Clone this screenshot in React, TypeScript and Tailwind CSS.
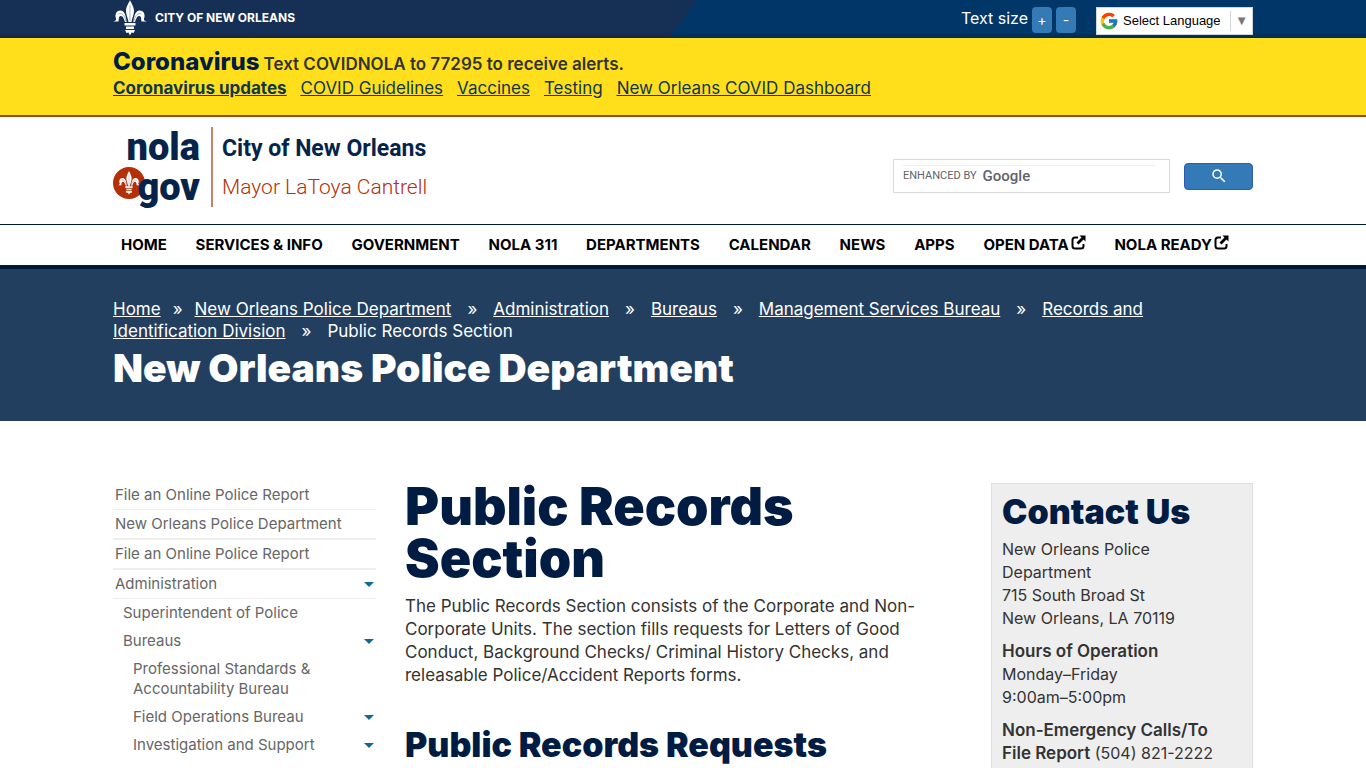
import React from "react";
import { FcGoogle } from "react-icons/fc";
import { MdSearch } from "react-icons/md";

function Fleur({ className }: { className: string }) {
  return (
    <svg viewBox="0 0 34 36" className={className} aria-hidden="true">
      <g fill="currentColor">
        <path d="M17 0c1 3 4 6.500 4 11c0 4-2 7-2.500 11h-3C15 18 13 15 13 11C13 6.500 16 3 17 0z" />
        <path d="M11.500 23h11v2.500h-11zM13 26.500h8v2.500h-8zM12 30h10l-1.500 3-2-.500L17 35.500l-1.500-3-2 .500z" />
        <path d="M13.700 22C13 16 11.500 10.500 7.500 10.500C3 10.500 1.500 15 3 18.500C3.300 20 2.500 21 0 21.500h5.500C6 19 5.500 16.500 7.500 16C10 15.500 11 19 12 22z" />
        <path d="M20.300 22C21 16 22.500 10.500 26.500 10.500C31 10.500 32.500 15 31 18.500C30.700 20 31.500 21 34 21.500h-5.500C28 19 28.500 16.500 26.500 16C24 15.500 23 19 22 22z" />
      </g>
      <g fill="none" stroke="#162f54" strokeWidth="0.6" opacity="0.6">
        <path d="M13 21C11.500 15 9 12.500 5.500 14M21 21C22.500 15 25 12.500 28.500 14M17 5V21" />
      </g>
    </svg>
  );
}

function ExternalIcon() {
  return (
    <svg viewBox="0 0 15 15" className="mb-1.5 h-[15px] w-[15px]" aria-hidden="true">
      <path d="M7 2.500H4Q1.500 2.500 1.500 5v6Q1.500 13.500 4 13.500h6Q12.500 13.500 12.500 11V9" fill="none" stroke="currentColor" strokeWidth="2" />
      <path d="M8.500 0.500H14.500V6.500L12.500 4.500L7.500 9.500L5.500 7.500L10.500 2.500Z" fill="currentColor" />
    </svg>
  );
}

const container = "mx-auto w-full max-w-[1170px] px-[15px]";

const alerts = ["COVID Guidelines", "Vaccines", "Testing", "New Orleans COVID Dashboard"];

const navItems = [
  { label: "Home" },
  { label: "Services & Info" },
  { label: "Government" },
  { label: "NOLA 311" },
  { label: "Departments" },
  { label: "Calendar" },
  { label: "News" },
  { label: "Apps" },
  { label: "Open Data", external: true },
  { label: "NOLA Ready", external: true },
];

const crumbs = [
  ["Home"],
  ["New Orleans Police Department"],
  ["Administration"],
  ["Bureaus"],
  ["Management Services Bureau"],
  ["Records and", "Identification Division"],
];

const sideItems = [
  { label: "File an Online Police Report", style: "h-[26px] border-b pl-0.5", caret: false },
  { label: "New Orleans Police Department", style: "h-[30px] border-b-2 pl-0.5", caret: false },
  { label: "File an Online Police Report", style: "h-[30px] border-b-2 pl-0.5", caret: false },
  { label: "Administration", style: "h-[29px] border-b pl-0.5", caret: true },
  { label: "Superintendent of Police", style: "h-7 pl-2.5", caret: false },
  { label: "Bureaus", style: "h-7 pl-2.5", caret: true },
  { label: "Professional Standards & Accountability Bureau", style: "h-12 pl-5 pr-12", caret: false },
  { label: "Field Operations Bureau", style: "h-7 pl-5", caret: true },
  { label: "Investigation and Support", style: "h-7 pl-5", caret: true },
];

function TopBar() {
  return (
    <div className="h-[38px] bg-[linear-gradient(to_bottom,transparent_32px,#0003),linear-gradient(125deg,#162f54_0_50%,#003768_50%)]">
      <div className={`${container} flex justify-between`}>
        <a href="#city" className="flex items-center gap-2 text-xs font-bold text-white">
          <Fleur className="h-9 w-[34px]" />
          CITY OF NEW ORLEANS
        </a>
        <div className="flex items-center gap-1 text-white">
          <span className="text-base">Text size</span>
          <button className="mt-1 h-[26px] w-5 rounded bg-[#337ab7] text-sm" aria-label="Increase text size">+</button>
          <button className="mt-1 h-[26px] w-5 rounded bg-[#337ab7] text-sm" aria-label="Decrease text size">-</button>
          <button className="mt-1.5 ml-4 flex h-7 w-[157px] items-center border border-gray-300 bg-white pr-0 pl-0.5 font-['Liberation_Sans',sans-serif] text-[13px] text-black">
            <FcGoogle className="mr-1 h-5 w-5" />
            <span className="flex-1 text-left">Select Language</span>
            <span className="border-l border-gray-300 px-1 text-[#777]">▼</span>
          </button>
        </div>
      </div>
    </div>
  );
}

function AlertBanner() {
  return (
    <section className="h-[79px] border-b-2 border-[#964b0b] bg-[#ffdf1b]">
      <div className={`${container} pt-3`}>
        <p className="flex items-baseline gap-1 leading-6">
          <strong className="text-2xl leading-6 font-extrabold text-[#001c43]">Coronavirus</strong>
          <strong className="text-[17px] font-semibold">Text COVIDNOLA to 77295 to receive alerts.</strong>
        </p>
        <p className="flex gap-3.5 text-[17px] leading-6 text-[#12364a] underline">
          <a href="#updates" className="font-bold">Coronavirus updates</a>
          {alerts.map((a) => (
            <a href="#alert" key={a}>{a}</a>
          ))}
        </p>
      </div>
    </section>
  );
}

function Brand() {
  return (
    <a href="#home" className="flex h-20 items-stretch font-[Roboto,sans-serif]">
      <span className="relative flex w-[87px] flex-col items-end text-[38px] leading-10 font-black text-[#06244a]">
        <span className="absolute top-10 left-0 flex h-8 w-8 items-center justify-center rounded-full bg-[#b33009] text-white">
          <Fleur className="h-6 w-7" />
        </span>
        <span>nola</span>
        <span className="relative">gov</span>
      </span>
      <span className="ml-[11px] border-l-2 border-[#c98270] pt-[3px] pl-[9px] whitespace-nowrap">
        <span className="block text-[23px] leading-[38px] font-bold text-[#06244a]">City of New Orleans</span>
        <span className="block text-[21px] leading-[38px] font-light text-[#b33009]">Mayor LaToya Cantrell</span>
      </span>
    </a>
  );
}

function Header() {
  return (
    <header className="h-[107px]">
      <div className={`${container} flex items-start justify-between pt-2.5`}>
        <Brand />
        <form className="mt-8 flex items-center gap-3.5">
          <label className="block h-[34px] w-[277px] border border-[#d9d9d9] px-[9px] pt-[5px] text-[#5f6368]">
            <span className="flex h-[22px] w-[252px] items-center gap-1.5 border-t border-[#eee] font-[Roboto,sans-serif]">
              <span className="text-[11px] whitespace-nowrap">ENHANCED BY</span>
              <span className="text-[15px] font-medium">Google</span>
              <input aria-label="Search" className="h-5 w-0 min-w-0 flex-1 outline-none" />
            </span>
          </label>
          <button type="button" aria-label="Search" className="flex h-[27px] w-[69px] items-center justify-center rounded-sm border border-[#2f5bb7] bg-[#337ab7] text-white">
            <MdSearch className="h-[18px] w-[18px]" />
          </button>
        </form>
      </div>
    </header>
  );
}

function Nav() {
  return (
    <nav className="h-[45px] border-t border-b-4 border-[#001a3a]">
      <div className={`${container} h-10`}>
        <ul className="flex h-full items-center justify-between pr-6 pl-2 text-[15px] font-bold text-black uppercase">
          {navItems.map((n) => (
            <li key={n.label}>
              <a href="#nav" className="flex items-center gap-0.5 whitespace-nowrap">
                {n.label}
                {n.external && <ExternalIcon />}
              </a>
            </li>
          ))}
        </ul>
      </div>
    </nav>
  );
}

function PageBanner() {
  return (
    <section className="h-[152px] bg-[#233f60] text-white">
      <div className={`${container} pt-[29px]`}>
        <ol className="text-[17px] leading-[22px]">
          {crumbs.map((parts, n) => (
            <li key={parts[0]} className="inline">
              <a href="#crumb" className="underline">
                {parts.map((part, i) => (
                  <React.Fragment key={part}>
                    {i > 0 && " "}
                    <span className="inline-block underline">{part}</span>
                  </React.Fragment>
                ))}
              </a>
              <span className={n === 0 ? "mx-3" : "mx-4"}>»</span>
            </li>
          ))}
          <li className="inline-block">Public Records Section</li>
        </ol>
        <p className="mt-2 text-[39px] leading-9 font-black">New Orleans Police Department</p>
      </div>
    </section>
  );
}

function SideMenu() {
  return (
    <ul className="w-[263px] shrink-0 pt-px text-[15px] leading-5 text-[#666]">
      {sideItems.map((s, i) => (
        <li key={i} className={`flex items-start justify-between border-[#eee] ${s.style}`}>
          <a href="#side" className={i === 0 ? "pt-px" : "pt-1"}>{s.label}</a>
          {s.caret && (
            <svg viewBox="0 0 10 5" className="mt-3 mr-0.5 h-[5px] w-2.5 shrink-0" aria-hidden="true">
              <path d="M0 0H10L5 5Z" fill="#126a8f" />
            </svg>
          )}
        </li>
      ))}
    </ul>
  );
}

export default function App() {
  return (
    <div className="h-screen overflow-hidden bg-white font-[Inter,sans-serif] text-[#333]">
      <TopBar />
      <AlertBanner />
      <Header />
      <Nav />
      <PageBanner />
      <div className={`${container} flex items-start pt-[62px]`}>
        <SideMenu />
        <main className="ml-[29px] w-[528px]">
          <h1 className="-mt-0.5 w-[460px] text-[52px] leading-[52px] font-black text-[#001c43]">Public Records Section</h1>
          <p className="mt-2.5 text-[17px] leading-[23px]">
            The Public Records Section consists of the Corporate and Non-Corporate Units. The section fills requests for Letters of Good Conduct, Background Checks/ Criminal History Checks, and releasable Police/Accident Reports forms.
          </p>
          <h2 className="mt-[38px] text-[34px] leading-10 font-black text-[#001c43]">Public Records Requests</h2>
        </main>
        <aside className="ml-auto w-[262px] border border-[#ddd] bg-[#eee] p-2.5 pb-20 text-base leading-[23px]">
          <h2 className="mb-2 text-[34px] leading-9 font-black text-[#001c43]">Contact Us</h2>
          <p>New Orleans Police<br />Department<br />715 South Broad St<br />New Orleans, LA 70119</p>
          <p className="mt-2.5"><strong className="text-[17px] font-semibold">Hours of Operation</strong><br />Monday–Friday<br />9:00am–5:00pm</p>
          <p className="mt-2.5"><strong className="text-[17px] font-semibold">Non-Emergency Calls/To<br />File Report</strong> (504) 821-2222</p>
        </aside>
      </div>
    </div>
  );
}
